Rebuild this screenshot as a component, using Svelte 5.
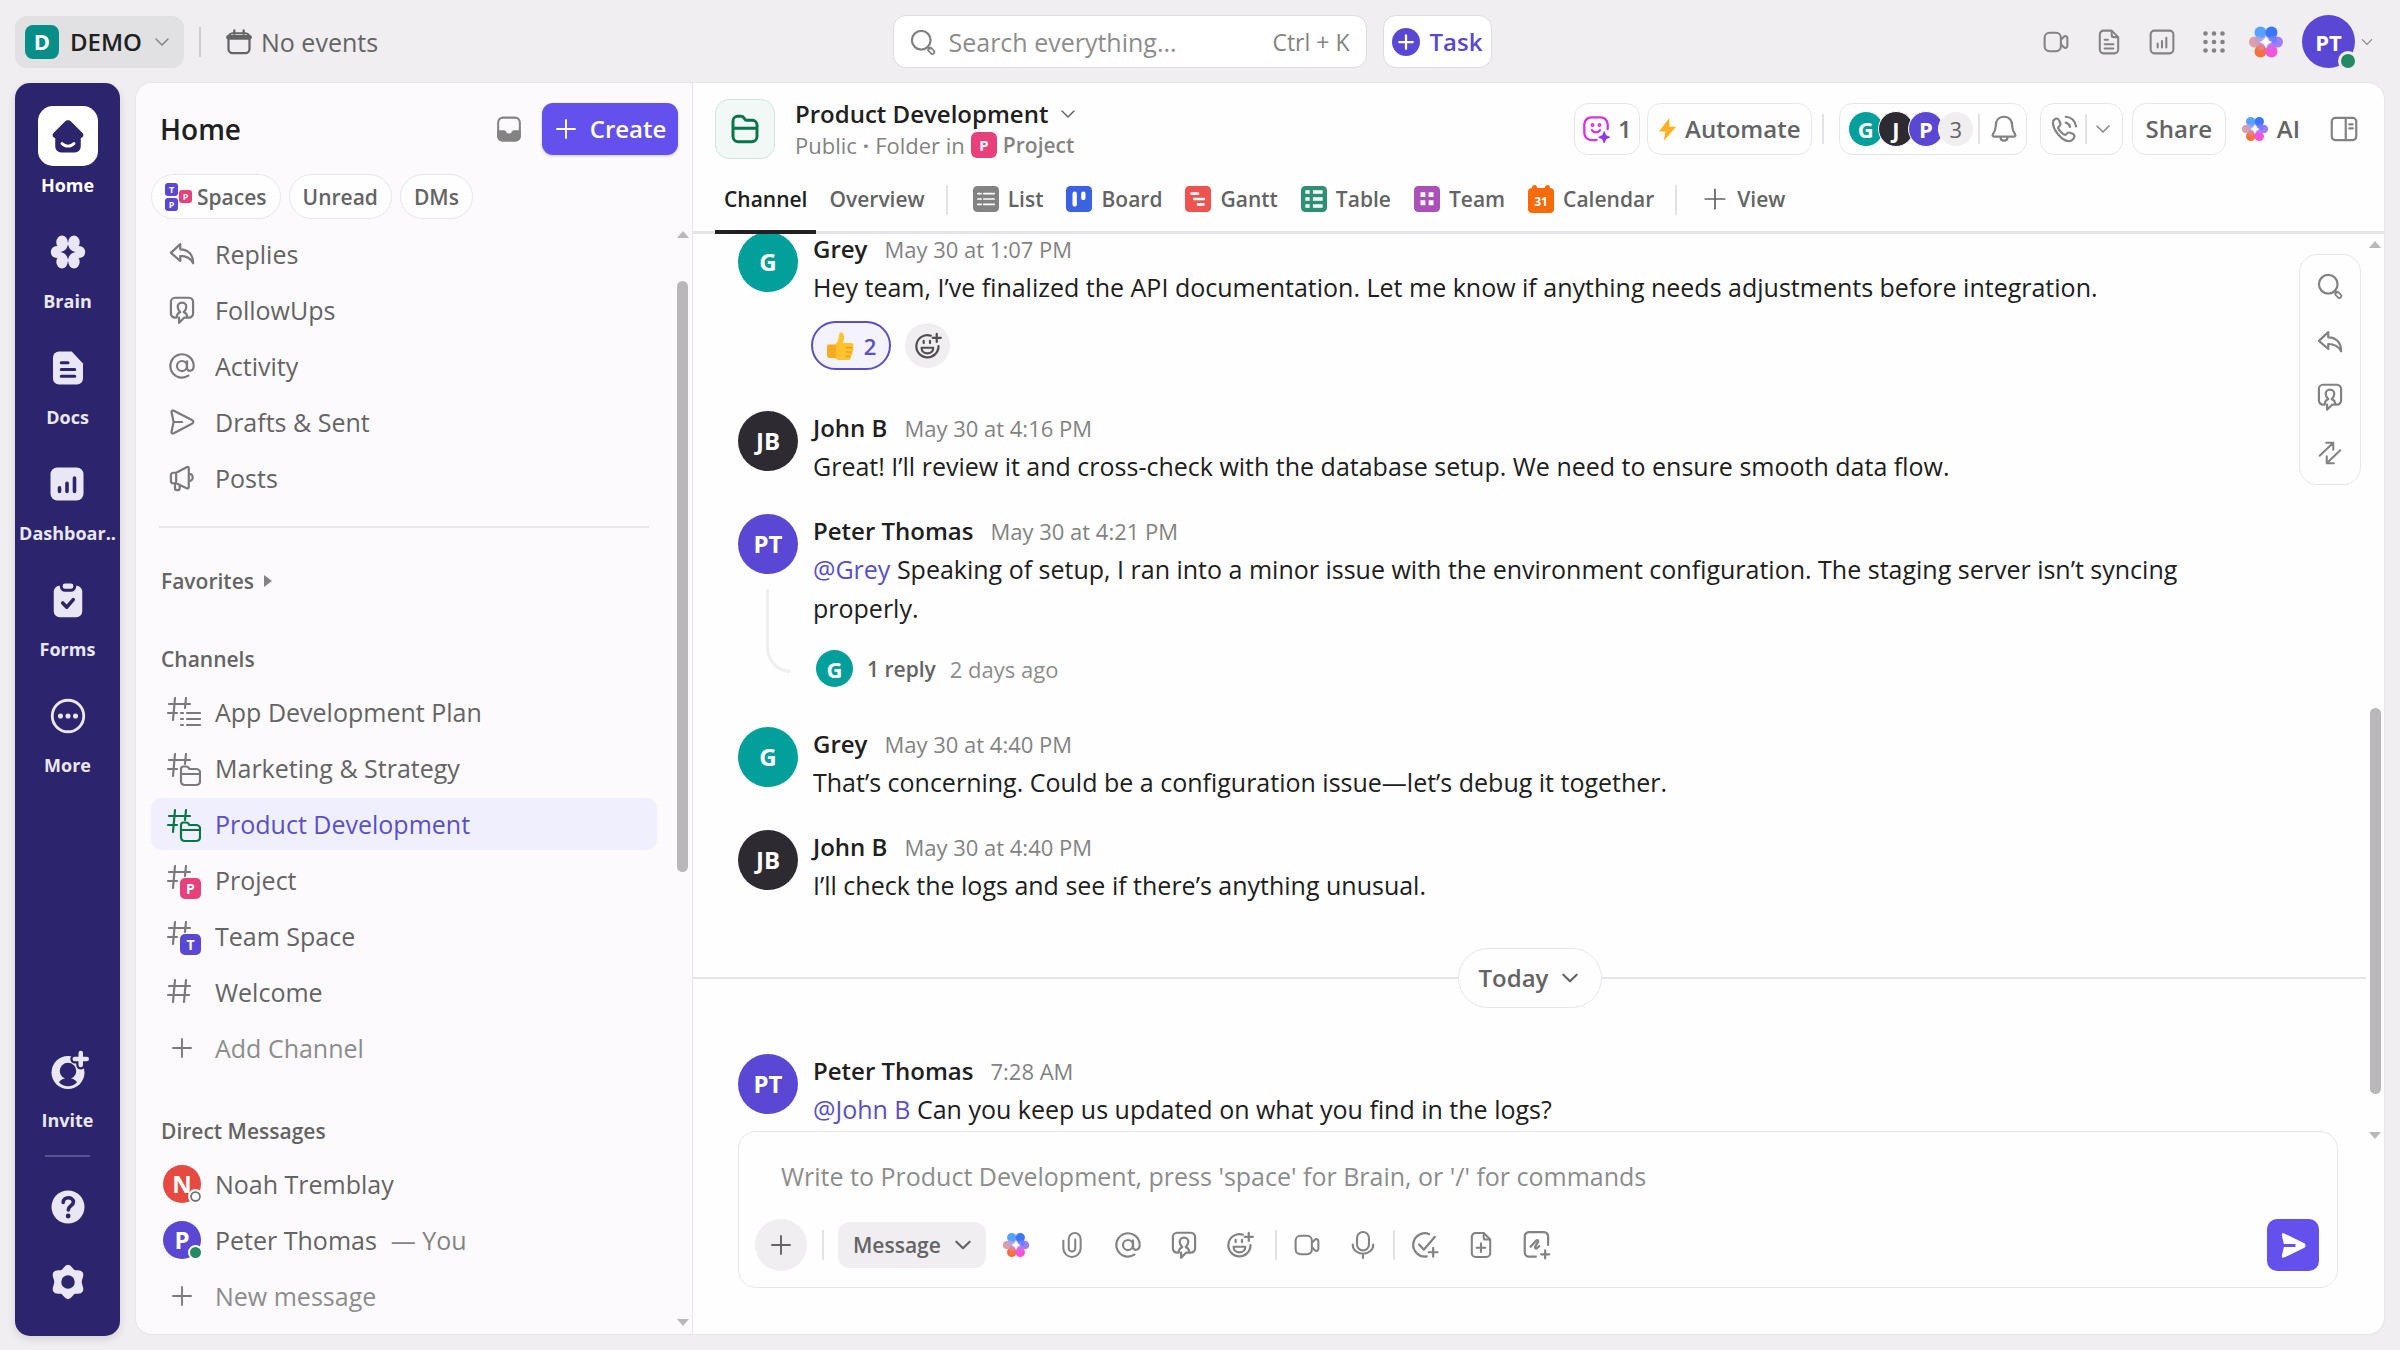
<script>
  const icons = {
    chevron: '<path d="M4 8l8 8 8-8"/>',
    calendar: '<rect x="3" y="4.5" width="18" height="17" rx="3.5"/><path d="M3 8h18" stroke-width="4"/><path d="M8 2v3M16 2v3"/>',
    search: '<circle cx="10.5" cy="10.5" r="8"/><path d="M16.5 16.5l1.5 1.2"/><rect x="17.4" y="16.6" width="3.4" height="6" rx="1.7" transform="rotate(-45 19.1 19.6)" stroke-width="1.5"/>',
    video: '<rect x="1.5" y="3.5" width="15" height="17" rx="4.5"/><path d="M16.5 10l3-3c1-.9 3-.3 3 1.200v7.600c0 1.500-2 2.100-3 1.200l-3-3"/>',
    doc: '<path d="M7 1.500h7.500L20.500 7.500V19a3.500 3.500 0 0 1-3.500 3.500H7A3.500 3.500 0 0 1 3.500 19V5A3.500 3.500 0 0 1 7 1.500z"/><path d="M14.500 2v3.500a2 2 0 0 0 2 2H20M8 10h3M8 14h8M8 18h8"/>',
    chart: '<rect x="1.5" y="1.5" width="21" height="21" rx="3.5"/><path d="M8 13.500V17M12 11v6M16 8v9"/>',
    grid: '<g fill="currentColor" stroke="none"><circle cx="3.5" cy="3.5" r="2.3"/><circle cx="12" cy="3.5" r="2.3"/><circle cx="20.5" cy="3.5" r="2.3"/><circle cx="3.5" cy="12" r="2.3"/><circle cx="12" cy="12" r="2.3"/><circle cx="20.5" cy="12" r="2.3"/><circle cx="3.5" cy="20.5" r="2.3"/><circle cx="12" cy="20.5" r="2.3"/><circle cx="20.5" cy="20.5" r="2.3"/></g>',
    inbox: '<rect x="2" y="1.5" width="20" height="21" rx="4.5"/><path d="M2 14h5.500c.6 0 1 .4 1.200 1 .5 1.300 1.600 2 3.300 2s2.800-.7 3.300-2c.2-.6.6-1 1.200-1H22v5a3.500 3.500 0 0 1-3.500 3.500h-13A3.500 3.500 0 0 1 2 19z" fill="currentColor"/>',
    plus: '<path d="M12 3v18M3 12h18"/>',
    reply: '<path d="M10.500 3.500L2.500 11l8 7v-4.300c5 0 8.700 1.500 11 6.300.3-7-4-12-11-12z"/>',
    followup: '<path d="M7.500 18.500H6A3.500 3.500 0 0 1 2.500 15V5A3.500 3.500 0 0 1 6 1.500h12A3.500 3.500 0 0 1 21.500 5v10a3.500 3.500 0 0 1-3.500 3.500h-4L9.500 23v-4.500M7.500 18.500c0-2.500 1-4 3-4.700C9 12.500 8.300 11 8.300 9.300a3.700 3.700 0 0 1 7.400 0c0 1.700-.7 3.200-2.200 4.500 2 .7 3 2.200 3 4.700"/>',
    at: '<circle cx="12" cy="12" r="4.3"/><path d="M16.300 8v5.500c0 3.800 5.700 3.500 5.700-1.500a10 10 0 1 0-4.500 8.300"/>',
    draft: '<path d="M3 3.500c0-1.300.8-1.700 2-1.200l15.500 8c1.600.8 1.600 2.300 0 3.200L5 21.700c-1.200.5-2 .1-2-1.200L4.800 12zM4.800 12H12"/>',
    horn: '<path d="M7 7.500l9-4.800c1-.5 1.800 0 1.800 1v16c0 1-.8 1.500-1.800 1L7 16.500H4.500a2 2 0 0 1-2-2v-5a2 2 0 0 1 2-2zM7 7.500v9M17.800 8.500c4.500-.5 4.500 6.500 0 6M6 16.500v4c0 1 .5 1.800 1.500 1.800h1c1 0 1.500-.6 1.500-1.500v-2.800"/>',
    bell: '<path d="M12 1.500c-4.500 0-7 3.300-7 7.500 0 4-1 5.500-2.500 7.500-.6.900-.2 2 1 2h17c1.200 0 1.600-1.100 1-2-1.500-2-2.500-3.500-2.500-7.500 0-4.200-2.500-7.500-7-7.500zM9 19c0 4 6 4 6 0"/>',
    phone: '<path d="M2.500 6.500C2.500 4.500 4.500 3 6 3c1.500 0 3 4 3 5 0 1.200-2 2-2 3 0 1.500 4.500 6 6 6 1 0 1.800-2 3-2s5 1.500 5 3c0 2-2.500 4.500-4.500 4.500C10.500 22.500 2.500 13 2.500 6.500zM13.500 6.500c2 .5 3.200 1.800 3.700 3.700M13.500 1.500c4.500.5 8 3.500 8.800 8.200"/>',
    panel: '<rect x="1.5" y="2.5" width="21" height="19" rx="3"/><path d="M13.500 3v18M16.500 8h3M16.500 11.500h3"/>',
    swap: '<path d="M2.500 14.500L15 2.500M8.500 2.500H15v6.500M21.500 9.500L9 21.500M15.500 21.500H9V15"/>',
    clip: '<path d="M4 8v7a8 8 0 0 0 16 0V6.500a5.500 5.500 0 0 0-11 0V15a3 3 0 0 0 6 0V7"/>',
    smile: '<path d="M14.500 3.200A9.500 9.500 0 1 0 21 12M19.500 1.500v7M16 5h7M8.300 7.500v2M13.700 7.500v2"/><path d="M6.500 13.500h10c0 6.500-10 6.500-10 0z"/>',
    mic: '<rect x="6.5" y="0" width="11" height="17" rx="5.5"/><path d="M2.500 11.500c0 5 4 8.500 9.500 8.500s9.500-3.500 9.500-8.500M12 20v4"/>',
    check: '<path d="M13.500 21.800A10 10 0 1 1 15.500 2.600M7 11.500l4 4.500L20.500 5M19 14.500v7.500M15.200 18.200h7.600"/>',
    adddoc: '<path d="M7 1h7.500l6 6v12.500a3.500 3.500 0 0 1-3.500 3.500H7a3.500 3.500 0 0 1-3.500-3.500v-15A3.500 3.500 0 0 1 7 1z"/><path d="M14.500 1.500V5a2 2 0 0 0 2 2H20M12 10.500v8M8 14.500h8"/>',
    sketch: '<path d="M11 22H5a3.500 3.500 0 0 1-3.500-3.500v-14A3.500 3.500 0 0 1 5 1h13a3.500 3.500 0 0 1 3.500 3.500V12M6.500 13.500l4.500-5c1.500-1.500 2.500-.2 1.700 1.200l-2 3.300c-1 1.700.3 2.600 1.500 1.500l1.800-1.500M19 16.500v7M15.500 20h7"/>',
    folder: '<path d="M3 6a3.500 3.500 0 0 1 3.500-3.500H9c1 0 1.700.4 2.200 1.200l.6.900c.4.600 1 .9 1.700.9h4A3.500 3.500 0 0 1 21 9v8.500a4 4 0 0 1-4 4H7a4 4 0 0 1-4-4zM3 11.500h18"/>',
    face: '<path d="M12.500 21.500H8A6 6 0 0 1 2 15.500V8a6 6 0 0 1 6-6h8a6 6 0 0 1 6 6v4"/><path d="M8.500 13c1.500 2.500 5.500 2.500 7 0"/><circle cx="9" cy="8.5" r=".7"/><circle cx="15" cy="8.5" r=".7"/><path d="M19 14.500l1.300 3.200 3.200 1.300-3.200 1.300L19 23.500l-1.300-3.200-3.200-1.300 3.200-1.300z" fill="#9333ea" stroke="#9333ea" stroke-width="1"/>',
    list: '<rect width="24" height="24" rx="4" fill="currentColor" stroke="none"/><path d="M4.500 7h3M10 7h9.500M4.500 12h3M10 12h9.500M4.500 17h3M10 17h9.500" stroke="#fff"/>',
    board: '<rect width="24" height="24" rx="4" fill="currentColor" stroke="none"/><path d="M8 7v10M16 7v4" stroke="#fff" stroke-width="4"/>',
    gantt: '<rect width="24" height="24" rx="4" fill="currentColor" stroke="none"/><path d="M6 7h6M8.500 12h9M12 17h5" stroke="#fff" stroke-width="2.5"/>',
    table: '<rect width="24" height="24" rx="4" fill="currentColor" stroke="none"/><path d="M4 5.500h4M11 5.500h9M4 12h4M11 12h9M4 18.500h4M11 18.500h9" stroke="#fff" stroke-width="3.2" stroke-linecap="butt"/>',
    team: '<rect width="24" height="24" rx="4" fill="currentColor" stroke="none"/><path d="M6 8h4.500M13.500 8H18M6 15.500h4.500M13.500 15.500H18" stroke="#fff" stroke-width="4.5" stroke-linecap="butt"/>',
    railHome: '<path d="M12 1.500c.8 0 1.400.3 2 .9l7.500 7.400c1.400 1.400.7 3.200-1 3.500V19a4 4 0 0 1-4 4h-9a4 4 0 0 1-4-4v-5.700c-1.700-.3-2.400-2.100-1-3.500L10 2.400c.6-.6 1.200-.9 2-.9z" fill="currentColor" stroke="none"/><path d="M8 17c2 2.300 6 2.300 8 0" stroke="#fff"/>',
    railDocs: '<path d="M6 1h8.500L22 9v10a4 4 0 0 1-4 4H6a4 4 0 0 1-4-4V5a4 4 0 0 1 4-4z" fill="currentColor" stroke="none"/><path d="M7.500 8.500H12M7.500 13h9M7.500 17.500h9" stroke="#2c246c" stroke-width="2"/>',
    railDash: '<rect x="1" y="1" width="22" height="22" rx="4.5" fill="currentColor" stroke="none"/><path d="M7 14.500V17M12 11.500V17M17 8v9" stroke="#2c246c" stroke-width="2.4"/>',
    railForms: '<path d="M2.500 6a4 4 0 0 1 4-3.500h11a4 4 0 0 1 4 3.500v13.500a4 4 0 0 1-4 4h-11a4 4 0 0 1-4-4z" fill="currentColor" stroke="none"/><rect x="7.5" y="0" width="9" height="5.5" rx="2.5" fill="currentColor" stroke="#2c246c"/><path d="M8.500 14l2.700 2.800 4.300-5" stroke="#2c246c" stroke-width="2.4"/>',
    railMore: '<circle cx="12" cy="12" r="10.5"/><g fill="currentColor" stroke="none"><circle cx="7" cy="12" r="1.7"/><circle cx="12" cy="12" r="1.7"/><circle cx="17" cy="12" r="1.7"/></g>',
    railInvite: '<circle cx="12" cy="13" r="11" fill="currentColor" stroke="none"/><circle cx="12" cy="12" r="5.5" fill="#2c246c" stroke="none"/><path d="M10 15h4v2c2 .4 3.400 1.300 4 2.500-3 3.500-9 3.500-12 0 .6-1.200 2-2.100 4-2.500z" fill="#2c246c" stroke="none"/><path d="M20.500 0v8M16.500 4h8" stroke="#2c246c" stroke-width="6"/><path d="M20.500 0v8M16.500 4h8" stroke-width="3"/>',
    railHelp: '<circle cx="12" cy="12" r="11" fill="currentColor" stroke="none"/><path d="M8.800 9c0-4.300 6.800-4 6.800-.3 0 2.500-3.400 2.400-3.400 5.300" stroke="#2c246c" stroke-width="2.4"/><circle cx="12.1" cy="18" r="1.6" fill="#2c246c" stroke="none"/>',
    railGear: '<path d="M12 1.500c2 0 2.300 2.700 4.300 3.500 1.800.6 3.700-.6 4.700 1.200 1 1.800-.8 3.300-.8 5.800s1.800 4 .8 5.800c-1 1.800-2.900.6-4.700 1.200-2 .8-2.300 3.500-4.300 3.500s-2.300-2.700-4.300-3.500c-1.800-.6-3.700.6-4.700-1.200-1-1.800.8-3.300.8-5.800S2 8 3 6.200c1-1.800 2.900-.6 4.700-1.200 2-.8 2.300-3.500 4.300-3.500z" fill="currentColor"/><circle cx="12" cy="12" r="4.5" fill="#2c246c" stroke="none"/>'
  };

  const railItems = [
    { label: 'Home', icon: 'railHome', active: true },
    { label: 'Brain', icon: 'brain' },
    { label: 'Docs', icon: 'railDocs' },
    { label: 'Dashboar..', icon: 'railDash' },
    { label: 'Forms', icon: 'railForms' },
    { label: 'More', icon: 'railMore' }
  ];

  const shortcuts = [
    { label: 'Replies', icon: 'reply' },
    { label: 'FollowUps', icon: 'followup' },
    { label: 'Activity', icon: 'at' },
    { label: 'Drafts & Sent', icon: 'draft' },
    { label: 'Posts', icon: 'horn' }
  ];

  const channels = [
    { label: 'App Development Plan', kind: 'list' },
    { label: 'Marketing & Strategy', kind: 'folder' },
    { label: 'Product Development', kind: 'folder', active: true },
    { label: 'Project', kind: 'badge', letter: 'P', tone: 'pink' },
    { label: 'Team Space', kind: 'badge', letter: 'T', tone: 'violet' },
    { label: 'Welcome', kind: 'plain' }
  ];

  const views = [
    { label: 'List', icon: 'list', tone: 'v-gray' },
    { label: 'Board', icon: 'board', tone: 'v-blue' },
    { label: 'Gantt', icon: 'gantt', tone: 'v-red' },
    { label: 'Table', icon: 'table', tone: 'v-green' },
    { label: 'Team', icon: 'team', tone: 'v-purple' },
    { label: 'Calendar', icon: 'cal31', tone: '' }
  ];

  const messages = [
    { id: 1, who: 'Grey', initials: 'G', tone: 'teal', time: 'May 30 at 1:07 PM', text: 'Hey team, I’ve finalized the API documentation. Let me know if anything needs adjustments before integration.', likes: 2 },
    { id: 2, who: 'John B', initials: 'JB', tone: 'dark', time: 'May 30 at 4:16 PM', text: 'Great! I’ll review it and cross-check with the database setup. We need to ensure smooth data flow.' },
    { id: 3, who: 'Peter Thomas', initials: 'PT', tone: 'violet', time: 'May 30 at 4:21 PM', mention: '@Grey', text: 'Speaking of setup, I ran into a minor issue with the environment configuration. The staging server isn’t syncing properly.', reply: true },
    { id: 4, who: 'Grey', initials: 'G', tone: 'teal', time: 'May 30 at 4:40 PM', text: 'That’s concerning. Could be a configuration issue—let’s debug it together.' },
    { id: 5, who: 'John B', initials: 'JB', tone: 'dark', time: 'May 30 at 4:40 PM', text: 'I’ll check the logs and see if there’s anything unusual.' }
  ];

  const today = [
    { id: 6, who: 'Peter Thomas', initials: 'PT', tone: 'violet', time: '7:28 AM', mention: '@John B', text: 'Can you keep us updated on what you find in the logs?' }
  ];

  let query = $state('');
  let draft = $state('');
</script>

{#snippet icon(name, cls = 'i28')}
  <svg class="icon {cls}" viewBox="0 0 24 24" aria-hidden="true">{@html icons[name]}</svg>
{/snippet}

{#snippet brain(cls)}
  <svg class="icon {cls}" viewBox="0 0 36 32" aria-hidden="true">
    <defs>
      <radialGradient id="core"><stop offset="0" stop-color="#e9dcff" /><stop offset="1" stop-color="#a58bf5" /></radialGradient>
    </defs>
    <g stroke="none">
      <circle cx="18" cy="16" r="9" fill="url(#core)" />
      <circle cx="6.5" cy="16" r="5.5" fill="#dba0a8" />
      <circle cx="29.5" cy="16" r="5.5" fill="#9a80fb" />
      <circle cx="12.5" cy="25.5" r="6" fill="#f5703f" />
      <circle cx="23.5" cy="25.5" r="6" fill="#fb50d8" />
      <circle cx="12.5" cy="6.5" r="6" fill="#58a2ff" />
      <circle cx="23.5" cy="6.5" r="6" fill="#3a76ff" />
      <circle cx="10.5" cy="14" r="4" fill="#b79fdc" opacity=".7" />
      <circle cx="25" cy="13.5" r="4" fill="#6f78ff" opacity=".8" />
      <circle cx="13" cy="21" r="3.5" fill="#e58396" opacity=".8" />
      <circle cx="23" cy="21" r="3.5" fill="#c96bf0" opacity=".8" />
      <path d="M18 9.500c1.200 4.200 2.300 5.300 6.500 6.500-4.200 1.200-5.300 2.300-6.500 6.500-1.200-4.200-2.300-5.300-6.500-6.500 4.200-1.200 5.300-2.300 6.500-6.500z" fill="#fff" />
    </g>
  </svg>
{/snippet}

{#snippet channelIcon(c)}
  <span class="slot">
    <svg class="hash" viewBox="0 0 38 38" aria-hidden="true">
      {#if c.kind === 'plain'}
        <path d="M12 7l-2 22M23 7l-2 22M6 13h21M5 22h21" />
      {:else}
        <path d="M12 5l-2 22M23 5l-1 10M6 11h21M5 20h9" />
      {/if}
      {#if c.kind === 'list'}
        <path d="M18 20h2M24 20h13M18 26h2M24 26h13M18 32h2M24 32h13" />
      {:else if c.kind === 'folder'}
        <path d="M18 20c0-1.500 1-2.500 2.500-2.500h3c1 0 1.500.5 2 1.200l.8 1.300H33c2.300 0 4 1.500 4 3.500v8.500c0 2.500-1.500 4-4 4H22c-2.500 0-4-1.500-4-4zM18 25h19" />
      {/if}
    </svg>
    {#if c.kind === 'badge'}<span class="mini {c.tone}">{c.letter}</span>{/if}
  </span>
{/snippet}

{#snippet message(m)}
  <article class="msg">
    <div class="side">
      <span class="avatar {m.tone}">{m.initials}</span>
      {#if m.reply}<span class="thread"></span>{/if}
    </div>
    <div class="content">
      <header><strong>{m.who}</strong><time>{m.time}</time></header>
      <p>{#if m.mention}<a href="#mention">{m.mention}</a>{' '}{/if}{m.text}</p>
      {#if m.likes}
        <div class="reactions">
          <button class="like" aria-label="Thumbs up">
            <svg class="thumb" viewBox="0 0 30 30" aria-hidden="true">
              <path d="M9 14c3-3 4-7 4.300-11 .2-2 3.700-2 4.400 1 .6 2.500.2 5-.7 8h8c3 0 3.400 3.500 1.300 4.500 2 1 1.500 4-.6 4.500 1.500 1.200.8 3.700-1.200 4 1 1.800 0 4-2.500 4h-9c-2.500 0-3-1-4-2z" fill="#fdc22d" />
              <path d="M1 15.500c0-1.500 1-2 2.500-2H10V27H4c-1.800 0-3-.8-3-2.500z" fill="#f7ac20" />
              <path d="M20 16.700h6.500M20 21h5.800M19.500 25.200h5" fill="none" stroke="#e08e16" />
            </svg>
            {m.likes}
          </button>
          <button class="add-reaction" aria-label="Add reaction">{@render icon('smile')}</button>
        </div>
      {/if}
      {#if m.reply}
        <div class="reply">
          <span class="avatar small teal">G</span>
          <a href="#thread">1 reply</a>
          <span>2 days ago</span>
        </div>
      {/if}
    </div>
  </article>
{/snippet}

<div class="app">
  <header class="topbar">
    <div class="top-left">
      <button class="workspace"><span class="logo">D</span>DEMO{@render icon('chevron', 'i18 muted')}</button>
      <span class="rule tall"></span>
      <button class="events">{@render icon('calendar', 'i28')}No events</button>
    </div>
    <div class="top-center">
      <label class="search">
        {@render icon('search', 'i28')}
        <input type="text" aria-label="Search" placeholder="Search everything..." bind:value={query} />
        <kbd>Ctrl + K</kbd>
      </label>
      <button class="task"><span class="dot">{@render icon('plus', 'i18 bold')}</span>Task</button>
    </div>
    <div class="top-right">
      <button aria-label="Clips">{@render icon('video', 'i26')}</button>
      <button aria-label="Notepad">{@render icon('doc', 'i26')}</button>
      <button aria-label="Reports">{@render icon('chart', 'i26')}</button>
      <button aria-label="Apps">{@render icon('grid', 'i24')}</button>
      <button class="top-brain" aria-label="Brain">{@render brain('brain-lg')}</button>
      <button class="me" aria-label="Account">
        <span class="avatar mid violet">PT<i class="presence"></i></span>
        {@render icon('chevron', 'i14')}
      </button>
    </div>
  </header>

  <div class="shell">
    <nav class="rail" aria-label="Main">
      {#each railItems as item (item.label)}
        <a href="#{item.icon}" class:active={item.active}>
          <span class="tile">
            {#if item.icon === 'brain'}
              <svg class="icon i36" viewBox="0 0 24 24" aria-hidden="true">
                <g fill="currentColor" stroke="none">
                  <ellipse cx="8" cy="5.5" rx="3.8" ry="4.5" /><ellipse cx="16" cy="5.5" rx="3.8" ry="4.5" />
                  <circle cx="4.5" cy="12" r="4" /><circle cx="19.5" cy="12" r="4" />
                  <ellipse cx="8" cy="18.5" rx="3.8" ry="4.5" /><ellipse cx="16" cy="18.5" rx="3.8" ry="4.5" />
                  <circle cx="12" cy="12" r="6.5" />
                </g>
                <path d="M12 7c1 3.300 1.700 4 5 5-3.300 1-4 1.700-5 5-1-3.300-1.700-4-5-5 3.300-1 4-1.700 5-5z" fill="#2c246c" stroke="none" />
              </svg>
            {:else}
              {@render icon(item.icon, 'i36')}
            {/if}
          </span>
          <span>{item.label}</span>
        </a>
      {/each}
      <span class="spacer"></span>
      <a href="#invite" class="invite"><span class="tile">{@render icon('railInvite', 'i36')}</span><span>Invite</span></a>
      <hr />
      <a href="#help" class="bare" aria-label="Help"><span class="tile">{@render icon('railHelp', 'i36')}</span></a>
      <a href="#settings" class="bare" aria-label="Settings"><span class="tile">{@render icon('railGear', 'i36')}</span></a>
    </nav>

    <div class="panel">
      <aside class="sidebar">
        <div class="side-head">
          <h1>Home</h1>
          <button class="inbox" aria-label="Inbox">{@render icon('inbox', 'i26')}</button>
          <button class="create">{@render icon('plus', 'i24')}Create</button>
        </div>
        <div class="chips">
          <button>
            <span class="spaces">
              <span><i class="violet">T</i><i class="violet">P</i></span>
              <i class="pink">P</i>
            </span>
            Spaces
          </button>
          <button>Unread</button>
          <button>DMs</button>
        </div>

        <div class="side-body">
          <div class="list">
            {#each shortcuts as s (s.label)}
              <a class="row" href="#{s.icon}"><span class="slot">{@render icon(s.icon)}</span>{s.label}</a>
            {/each}
            <hr />
            <h2 class="fav">Favorites <span class="tri"></span></h2>
            <h2>Channels</h2>
            {#each channels as c (c.label)}
              <a class="row" class:active={c.active} href="#channel">{@render channelIcon(c)}{c.label}</a>
            {/each}
            <button class="row faint"><span class="slot">{@render icon('plus', 'i24')}</span>Add Channel</button>
            <h2 class="dm">Direct Messages</h2>
            <a class="row" href="#noah"><span class="avatar dm-av red">N<i class="presence off"></i></span>Noah Tremblay</a>
            <a class="row" href="#peter"><span class="avatar dm-av violet">P<i class="presence"></i></span>Peter Thomas <span class="you">— You</span></a>
            <button class="row faint"><span class="slot">{@render icon('plus', 'i24')}</span>New message</button>
          </div>
          <div class="scroll side-scroll"><span class="up"></span><span class="bar"></span><span class="down"></span></div>
        </div>
      </aside>

      <main>
        <div class="head">
          <span class="head-icon">{@render icon('folder', 'i32')}</span>
          <div class="title">
            <h2>Product Development {@render icon('chevron', 'i18')}</h2>
            <p>Public <b>·</b> Folder in <span class="badge pink">P</span><a href="#project">Project</a></p>
          </div>
          <div class="actions">
            <button class="box b-face"><span class="face">{@render icon('face')}</span>1</button>
            <button class="box b-auto">
              <svg class="bolt" viewBox="0 0 20 28" aria-hidden="true"><path d="M12 2L1 16h7l-2 10L19 11h-7z" /></svg>Automate
            </button>
            <span class="rule"></span>
            <div class="box people">
              <span class="avatar tiny teal">G</span>
              <span class="avatar tiny dark">J</span>
              <span class="avatar tiny violet">P</span>
              <span class="avatar tiny count">3</span>
              <span class="rule"></span>
              <button aria-label="Notifications">{@render icon('bell')}</button>
            </div>
            <div class="box call">
              <button aria-label="Call">{@render icon('phone')}</button>
              <span class="rule"></span>
              <button aria-label="Call options">{@render icon('chevron', 'i18')}</button>
            </div>
            <button class="box share">Share</button>
            <button class="ai">{@render brain('brain-sm')}AI</button>
            <button class="side-toggle" aria-label="Toggle panel">{@render icon('panel')}</button>
          </div>
        </div>

        <nav class="tabs" aria-label="Views">
          <a href="#channel" class="tab active">Channel</a>
          <a href="#overview" class="tab">Overview</a>
          <span class="rule"></span>
          {#each views as v (v.label)}
            <a href="#{v.icon}" class="tab">
              {#if v.icon === 'cal31'}
                <svg class="cal31" viewBox="0 0 26 28" aria-hidden="true">
                  <rect y="3" width="26" height="25" rx="4" />
                  <rect x="4" width="5" height="6" rx="2.5" /><rect x="17" width="5" height="6" rx="2.5" />
                  <text x="13" y="21">31</text>
                </svg>
              {:else}
                {@render icon(v.icon, `i26 ${v.tone}`)}
              {/if}
              {v.label}
            </a>
          {/each}
          <span class="rule"></span>
          <button class="tab">{@render icon('plus', 'i26')}View</button>
        </nav>

        <div class="feed">
          <div class="stream">
            {#each messages as m (m.id)}
              {@render message(m)}
            {/each}
            <div class="day"><button>Today {@render icon('chevron', 'i20 thick')}</button></div>
            {#each today as m (m.id)}
              {@render message(m)}
            {/each}
          </div>
          <div class="scroll main-scroll"><span class="up"></span><span class="bar"></span><span class="down"></span></div>
          <div class="floating">
            <button aria-label="Search channel">{@render icon('search')}</button>
            <button aria-label="Replies">{@render icon('reply')}</button>
            <button aria-label="FollowUps">{@render icon('followup')}</button>
            <button aria-label="Sync">{@render icon('swap', 'i26')}</button>
          </div>
        </div>

        <form class="composer">
          <textarea rows="1" aria-label="Message" placeholder="Write to Product Development, press 'space' for Brain, or '/' for commands" bind:value={draft}></textarea>
          <div class="tools">
            <button type="button" class="more" aria-label="Add">{@render icon('plus', 'i24')}</button>
            <span class="rule"></span>
            <label class="kind">
              <select aria-label="Message type"><option>Message</option></select>
              {@render icon('chevron', 'i20 thick')}
            </label>
            <button type="button" class="tool" aria-label="Brain">{@render brain('brain-sm')}</button>
            <button type="button" class="tool" aria-label="Attach">{@render icon('clip', 'i26')}</button>
            <button type="button" class="tool" aria-label="Mention">{@render icon('at')}</button>
            <button type="button" class="tool" aria-label="FollowUp">{@render icon('followup')}</button>
            <button type="button" class="tool" aria-label="Emoji">{@render icon('smile')}</button>
            <span class="rule sep first"></span>
            <button type="button" class="tool" aria-label="Record clip">{@render icon('video', 'i26')}</button>
            <button type="button" class="tool" aria-label="Voice">{@render icon('mic', 'i26')}</button>
            <span class="rule sep"></span>
            <button type="button" class="tool" aria-label="Create task">{@render icon('check')}</button>
            <button type="button" class="tool" aria-label="Create doc">{@render icon('adddoc', 'i26')}</button>
            <button type="button" class="tool" aria-label="Create whiteboard">{@render icon('sketch')}</button>
            <button type="submit" class="send" aria-label="Send">
              <svg viewBox="0 0 28 28" aria-hidden="true"><path d="M2 4c-.6-2.300.7-3.300 2.800-2.300l20 9.800c2.300 1.100 2.300 3.900 0 5l-20 9.800C2.700 27.300 1.400 26.300 2 24l2-8.500h12v-3H4z" /></svg>
            </button>
          </div>
        </form>
      </main>
    </div>
  </div>
</div>

<style>
  :global(body){margin:0;background:#f0eef1}
  .app{height:100vh;box-sizing:border-box;display:flex;flex-direction:column;padding-bottom:14px;font-family:"Open Sans","Noto Sans",sans-serif;font-size:25px;line-height:32px;color:#646464;overflow:hidden}
  .app *{box-sizing:border-box}
  button,input,select,textarea{font:inherit;color:inherit;background:none;border:0;padding:0;margin:0}
  button{display:flex;align-items:center;justify-content:center;white-space:nowrap}
  a{color:inherit;text-decoration:none}
  h1,h2,p{margin:0}
  .spacer{flex:1}
  .icon{display:block;flex:none;fill:none;stroke:currentColor;stroke-width:1.9;stroke-linecap:round;stroke-linejoin:round;overflow:visible}
  .i14{width:14px;height:14px}.i18{width:18px;height:18px}.i20{width:20px;height:20px}
  .i24{width:24px;height:24px}.i26{width:26px;height:26px}.i28{width:28px;height:28px}.i32{width:32px;height:32px}.i36{width:36px;height:36px}
  .bold{stroke-width:3}.thick{stroke-width:2.6}.muted{color:#838383}
  .brain-lg{width:36px;height:32px}.brain-sm{width:28px;height:26px}
  .rule{flex:none;width:2px;height:30px;background:#e4e2e6}
  .rule.tall{background:#cfcdd1}
  .violet{background:#5a48d5}.teal{background:#03a09b}.dark{background:#2d2a31}.red{background:#e5493f}.pink{background:#e8407a}

  .avatar{position:relative;flex:none;display:flex;align-items:center;justify-content:center;width:60px;height:60px;border-radius:50%;color:#fff;font-weight:700;font-size:24px}
  .avatar.mid{width:53px;height:53px;font-size:22px}
  .avatar.small{width:37px;height:37px;font-size:22px}
  .avatar.tiny{width:36px;height:36px;font-size:22px;margin-right:-6px;border:1px solid #fff}
  .avatar.dm-av{width:38px;height:38px;font-size:24px}
  .avatar.count{background:#f0eeef;color:#646464;font-weight:500}
  .presence{position:absolute;right:-3px;bottom:-3px;width:20px;height:20px;border-radius:50%;background:#238a65;border:3px solid #f0eef1}
  .dm-av .presence{width:15px;height:15px;right:-2px;bottom:-1px;border:2px solid #fff}
  .dm-av .off{background:#fff;box-shadow:inset 0 0 0 2px #777}

  .topbar{flex:none;height:83px;display:grid;grid-template-columns:1fr auto 1fr;align-items:center;padding:0 26px 0 15px}
  .top-left,.top-center,.top-right{display:flex;align-items:center}
  .workspace{height:52px;gap:11px;padding:0 13px 0 10px;border-radius:12px;background:#e1e0e3;color:#202020;font-size:24px;font-weight:600}
  .logo{width:34px;height:34px;border-radius:8px;background:#058f88;color:#fff;font-size:22px;font-weight:700}
  .top-left{gap:15px}
  .events{gap:8px;padding-left:9px}
  .top-center{gap:16px;margin-right:5px}
  .search{width:474px;height:53px;display:flex;align-items:center;gap:12px;padding:0 16px 0 15px;border:1px solid #dedce0;border-radius:13px;background:#fff;color:#838383}
  .search input{flex:1;min-width:0;outline:0}
  input::placeholder,textarea::placeholder{color:#8d8d8d;opacity:1}
  kbd{font:inherit;font-size:23px}
  .task{height:53px;width:109px;gap:10px;border:1px solid #dedce0;border-radius:13px;background:#fff;color:#5a48d5;font-size:24px;font-weight:600}
  .dot{width:28px;height:28px;border-radius:50%;background:#5a48d5;color:#fff;display:flex;align-items:center;justify-content:center}
  .top-right{justify-content:flex-end;gap:27px;color:#838383}
  .top-right .top-brain{margin-left:-5px}
  .top-right .me{gap:5px;margin-left:-9px}

  .shell{flex:1;min-height:0;display:flex;gap:16px;padding:0 16px 0 15px}
  .rail{flex:none;width:105px;display:flex;flex-direction:column;align-items:center;padding:23px 0 24px;border-radius:15px;background:#2c246c;color:#e9e7f5;box-shadow:0 3px 8px rgba(0,0,0,.12)}
  .rail a{flex:none;height:116px;display:flex;flex-direction:column;align-items:center;gap:7px;font-size:18px;line-height:24px;font-weight:700;white-space:nowrap}
  .tile{width:60px;height:60px;border-radius:15px;display:flex;align-items:center;justify-content:center}
  .active .tile{background:#fff;color:#2c246c}
  .rail a.active{color:#fff}
  .rail a.invite{height:92px}
  .rail hr{width:45px;height:2px;border:0;background:#5b5490;margin:22px 0 20px}
  .rail a.bare{height:60px}
  .rail a.bare + a.bare{margin-top:15px}

  .panel{flex:1;min-width:0;display:flex;margin-bottom:2px;border-radius:16px;background:#fefefe;box-shadow:0 0 2px rgba(0,0,0,.14);overflow:hidden}
  .sidebar{flex:none;width:557px;display:flex;flex-direction:column;background:#fcfafd;border-right:1px solid #e8e6ea}
  .side-head{display:flex;align-items:center;padding:20px 14px 0 24px}
  h1{flex:1;font-size:28px;line-height:36px;font-weight:600;color:#202020}
  .inbox{color:#838383;margin-right:20px}
  .create{width:136px;height:52px;gap:12px;border-radius:11px;background:#6450ec;color:#fff;font-size:24px;font-weight:600;box-shadow:0 1px 3px rgba(0,0,0,.2)}
  .chips{display:flex;gap:8px;padding:19px 0 0 15px}
  .chips button{height:45px;padding:0 13px;border:1px solid #e8e6ea;border-radius:23px;background:#fefdff;font-size:21px;font-weight:600}
  .spaces{display:flex;align-items:center;gap:1px;margin-right:5px}
  .spaces span{display:flex;flex-direction:column;gap:2px}
  .spaces i{display:flex;align-items:center;justify-content:center;width:13px;height:13px;border-radius:3px;color:#fff;font-style:normal;font-size:9px;line-height:13px;font-weight:700}

  .side-body{flex:1;min-height:0;display:flex;padding-top:9px}
  .list{flex:1;min-width:0;padding:0 16px 0 15px}
  .row{display:flex;align-items:center;justify-content:flex-start;width:100%;height:52px;margin-bottom:4px;padding-left:12px;border-radius:10px}
  .row.active{background:#efeffe;color:#5a4fc8}
  .row.active .slot{color:#067647}
  .faint{color:#8d8d8d}
  .you{color:#838383;margin-left:14px}
  .slot{position:relative;flex:none;display:flex;align-items:center;justify-content:center;width:38px;height:38px;margin-right:14px;color:#7a7a7a}
  .row .dm-av{margin-right:14px}
  .hash{width:38px;height:38px;fill:none;stroke:currentColor;stroke-width:2.2;stroke-linecap:round}
  .mini{position:absolute;right:0;bottom:0;width:21px;height:21px;border-radius:5px;color:#fff;font-size:14px;line-height:21px;font-weight:700;text-align:center}
  .list hr{height:2px;border:0;background:#e6e4e8;margin:22px 8px 38px}
  .list h2{display:flex;align-items:center;gap:10px;padding-left:10px;margin-bottom:12px;font-size:21px;line-height:30px;font-weight:600}
  .list h2.fav{margin-bottom:48px}
  .list h2.dm{margin-top:42px}
  .tri{border-left:8px solid #838383;border-top:6px solid transparent;border-bottom:6px solid transparent}

  .scroll{flex:none;display:flex;flex-direction:column;align-items:center}
  .scroll .up,.scroll .down{border:6px solid transparent;border-top:0;border-bottom:7px solid #b9b7ba}
  .scroll .down{border-bottom:0;border-top:7px solid #b9b7ba;margin-top:auto}
  .bar{width:11px;border-radius:6px;background:#b9b7ba}
  .side-scroll{width:19px;padding:3px 0 8px}
  .side-scroll .bar{height:54%;margin-top:43px}
  .main-scroll{width:18px;padding:7px 0 0;margin-bottom:-8px}
  .main-scroll .bar{height:43%;margin-top:460px}

  main{flex:1;min-width:0;display:flex;flex-direction:column;padding-bottom:46px}
  .head{display:flex;align-items:center;padding:15px 26px 0 22px}
  .head-icon{display:flex;align-items:center;justify-content:center;width:60px;height:60px;margin-right:20px;border:1px solid #d3e3dd;border-radius:14px;background:#f1f8f6;color:#067647}
  .head-icon .icon{stroke-width:2.2}
  .title h2{display:flex;align-items:center;gap:11px;font-size:24px;line-height:32px;font-weight:600;color:#202020}
  .title .icon{color:#646464}
  .title p{display:flex;align-items:center;gap:6px;font-size:22px;line-height:30px;color:#838383}
  .title a{font-size:21px;font-weight:600}
  .badge{width:26px;height:26px;border-radius:6px;color:#fff;font-size:15px;line-height:26px;font-weight:700;text-align:center}
  .actions{margin-left:auto;display:flex;align-items:center}
  .actions button{font-size:24px;font-weight:600}
  .box{display:flex;align-items:center;justify-content:center;height:52px;border:1px solid #e8e6ea;border-radius:14px}
  .face{color:#d634dc}
  .face .icon{stroke-width:2}
  .b-face{width:66px;gap:8px;margin-right:7px}
  .b-auto{width:165px;gap:8px;margin-right:10px}
  .bolt{width:19px;height:27px;fill:#ffb020}
  .people{width:188px;margin:0 13px 0 15px;justify-content:flex-start;padding-left:8px}
  .people .rule{margin:0 10px 0 10px}
  .call{width:83px;gap:7px;margin-right:9px}
  .share{width:94px;margin-right:15px}
  .ai{gap:8px;margin-right:30px}
  .side-toggle,.people button,.call button{color:#838383}

  .tabs{flex:none;height:74px;display:flex;align-items:stretch;padding:0 0 0 22px;border-bottom:3px solid #e6e4e8}
  .tab{display:flex;align-items:center;gap:9px;margin-right:23px;padding-top:7px;font-size:21px;font-weight:600}
  .tab.active{padding:7px 9px 0;margin:0 13px -3px 0;border-bottom:4px solid #202020;color:#202020}
  .tabs .rule{align-self:center;margin:8px 25px 0 -2px}
  .tab .icon.i26{stroke-width:1.6}
  .v-gray{color:#838383}.v-blue{color:#3b63e0}.v-red{color:#ef5350}.v-green{color:#2e9072}.v-purple{color:#ab4fb9}
  .cal31{width:26px;height:28px;fill:#f96b08;stroke:none}
  .cal31 text{fill:#fff;font-size:12px;font-weight:700;text-anchor:middle}

  .feed{position:relative;flex:1;min-height:0;display:flex}
  .stream{flex:1;min-width:0;overflow:hidden;padding-left:45px;color:#202020}
  .msg{display:flex;gap:15px;margin-bottom:26px;padding-right:150px}
  .msg:first-child{margin-top:-4px}
  .side{flex:none;width:60px;display:flex;flex-direction:column;align-items:flex-end;padding-top:2px}
  .thread{width:25px;height:84px;margin:15px 7px 0 0;border-left:3px solid #f0eef1;border-bottom:3px solid #f0eef1;border-bottom-left-radius:25px}
  .msg header{display:flex;align-items:center;gap:17px;height:38px;line-height:28px}
  .msg strong{font-weight:600;font-size:24px}
  .msg time{font-size:22px;color:#838383}
  .msg p{font-size:25px;line-height:39px}
  .msg p a{color:#5a4fc8}
  .reactions{display:flex;align-items:center;gap:14px;margin:14px 0 13px -2px}
  .like{width:80px;height:49px;gap:8px;border:2px solid #5a4fc8;border-radius:25px;background:#f3f2fd;color:#5a4fc8;font-size:22px;font-weight:600}
  .thumb{width:30px;height:30px}
  .add-reaction{width:45px;height:45px;border-radius:50%;background:#f0eef1;color:#4f4f4f}
  .reply{display:flex;align-items:center;gap:14px;margin:22px 0 12px 3px;font-size:22px;color:#8d8d8d}
  .reply a{font-size:21px;font-weight:600;color:#646464}
  .day{display:flex;align-items:center;margin:43px 0 44px -45px}
  .day::before,.day::after{content:"";flex:1;height:2px;background:#e6e4e8}
  .day button{width:144px;height:60px;gap:12px;border:1px solid #e8e6ea;border-radius:30px;color:#646464;font-size:24px;font-weight:600}
  .floating{position:absolute;top:20px;right:23px;width:62px;height:231px;padding:3px 0;display:flex;flex-direction:column;align-items:stretch;border:1px solid #e8e6ea;border-radius:18px;background:#fefefe;color:#838383}
  .floating button{flex:1}

  .composer{flex:none;height:157px;display:flex;flex-direction:column;justify-content:space-between;margin:0 46px 0 45px;padding:25px 18px 16px 16px;border:1px solid #e8e6ea;border-radius:18px;background:#fefefe}
  textarea{display:block;height:40px;line-height:38px;padding:0 0 0 26px;resize:none;outline:0;overflow:hidden}
  .tools{display:flex;align-items:center;color:#838383}
  .more{width:52px;height:52px;margin-right:15px;border-radius:50%;background:#f0eef1;color:#646464}
  .kind{display:flex;align-items:center;width:148px;height:46px;margin:0 2px 0 14px;padding:0 13px 0 15px;border-radius:12px;background:#f0eef1;color:#646464}
  .kind select{flex:1;min-width:0;appearance:none;font-size:21px;font-weight:600}
  .tool{width:56px;height:46px}
  .sep{margin:0 2px}
  .sep.first{margin-left:7px}
  .send{width:52px;height:52px;margin-left:auto;border-radius:10px;background:#6450ec}
  .send svg{width:27px;height:27px;fill:#fff}
</style>
